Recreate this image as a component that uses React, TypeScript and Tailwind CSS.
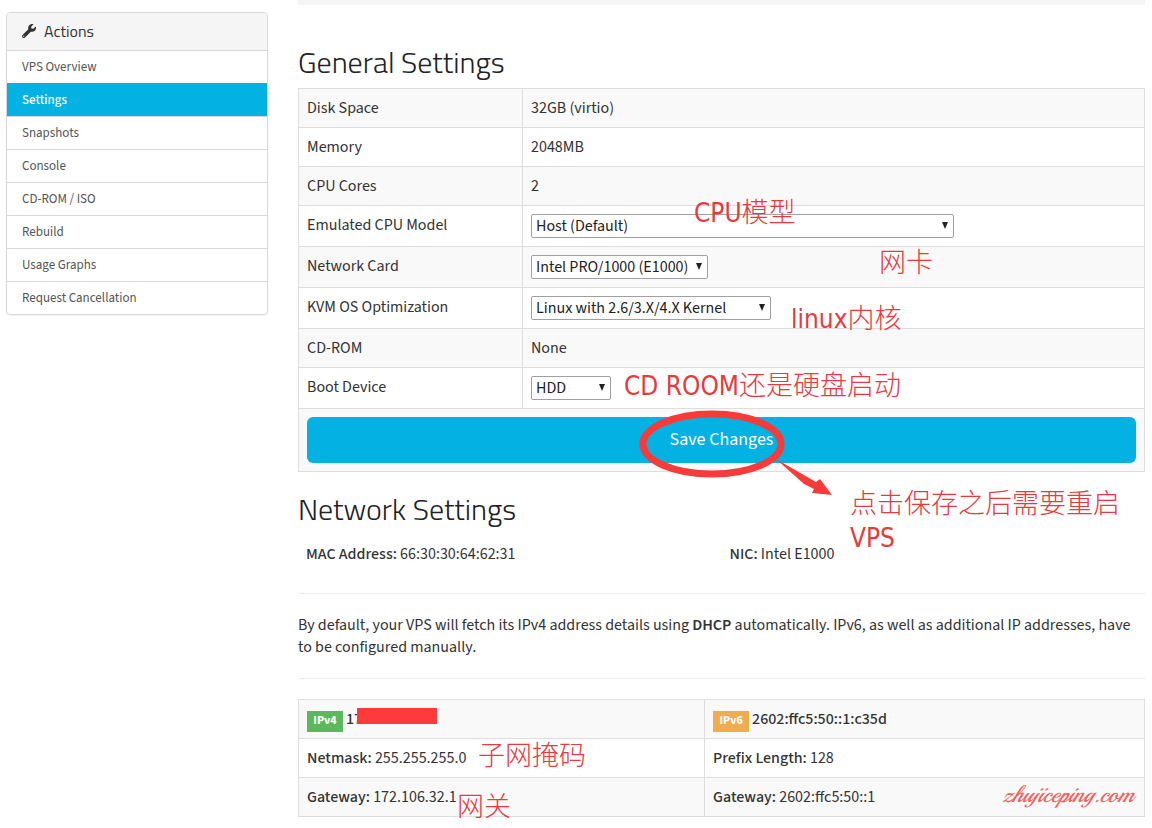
import type { ReactNode } from "react";
import { FaWrench } from "react-icons/fa";

const actions = [
  "VPS Overview",
  "Settings",
  "Snapshots",
  "Console",
  "CD-ROM / ISO",
  "Rebuild",
  "Usage Graphs",
  "Request Cancellation",
];

const cell = "border border-[#dddddd] p-2 align-top";

function Heading({ children }: { children: ReactNode }) {
  return (
    <h2 className="mb-[9px] pt-px font-['Titillium_Web','Noto_Sans',sans-serif] text-[30px] leading-[33px] font-light text-[#222222]">
      {children}
    </h2>
  );
}

function Row({ label, htmlFor, children }: { label: string; htmlFor?: string; children: ReactNode }) {
  return (
    <tr className="odd:bg-[#f9f9f9]">
      <th scope="row" className={`${cell} text-left font-normal`}>
        {htmlFor ? <label htmlFor={htmlFor} className="block">{label}</label> : label}
      </th>
      <td className={cell}>{children}</td>
    </tr>
  );
}

function Select({ id, width, options }: { id: string; width: string; options: string[] }) {
  return (
    <div className={`relative ${width}`}>
      <select
        id={id}
        className="block h-6 w-full appearance-none rounded-[2px] border border-[#a0a0a0] bg-white pr-4 pl-1 leading-[22px] text-[#222222]"
      >
        {options.map((option) => (
          <option key={option}>{option}</option>
        ))}
      </select>
      <svg viewBox="0 0 6 7" className="pointer-events-none absolute top-2 right-1.5 h-[7px] w-1.5" aria-hidden="true">
        <path d="M0 0h6L3 7z" fill="#222222" />
      </svg>
    </div>
  );
}

function Note({ className, latin, children }: { className: string; latin?: string; children: ReactNode }) {
  return (
    <span
      className={`pointer-events-none absolute font-['Noto_Sans_CJK_SC',sans-serif] text-[27px] leading-[34px] font-light whitespace-nowrap text-[#e8393c] ${className}`}
    >
      {latin && <Latin>{latin}</Latin>}
      {children}
    </span>
  );
}

function Latin({ children }: { children: ReactNode }) {
  return <span className="font-['DejaVu_Sans_Condensed','DejaVu_Sans',sans-serif] text-[26px] leading-[1] font-normal">{children}</span>;
}

function Badge({ color, children }: { color: string; children: ReactNode }) {
  return (
    <span className={`mt-[3px] mr-[3px] -mb-0.5 inline-block h-[21px] w-9 text-center text-[12px] leading-[19px] font-bold text-white ${color}`}>
      {children}
    </span>
  );
}

export default function App() {
  return (
    <div className="flex items-start gap-[30px] bg-white pr-[7px] pb-3 pl-1.5 font-['Source_Sans_Pro','Source_Sans_3','Noto_Sans_CJK_SC',sans-serif] text-[16px] leading-[22px] text-[#333333]">
      <nav className="mt-3 w-[262px] shrink-0 overflow-hidden rounded border border-[#d8d8d8] shadow-xs" aria-label="Actions">
        <h3 className="flex h-[37px] items-center gap-2 bg-[#f5f5f5] pb-px pl-[15px] font-['Titillium_Web','Noto_Sans',sans-serif] text-[16px] text-[#333333]">
          <FaWrench className="size-3.5" />
          Actions
        </h3>
        <ul className="text-[13px]">
          {actions.map((name) => (
            <li key={name}>
              <a
                href="#"
                className={
                  name === "Settings"
                    ? "block h-[33px] border-t border-[#04b1e3] bg-[#04b1e3] pl-[15px] leading-[32px] font-medium text-white"
                    : "block h-[33px] border-t border-[#d8d8d8] pl-[15px] leading-[32px] text-[#555555]"
                }
              >
                {name}
              </a>
            </li>
          ))}
        </ul>
      </nav>

      <main className="relative min-w-0 grow">
        <div className="mb-10 h-[5px] bg-[#f5f5f5]" />
        <Heading>General Settings</Heading>
        <form onSubmit={(event) => event.preventDefault()}>
          <table className="mb-5 w-full table-fixed border-collapse">
            <colgroup>
              <col className="w-[224px]" />
              <col />
            </colgroup>
            <tbody>
              <Row label="Disk Space">32GB (virtio)</Row>
              <Row label="Memory">2048MB</Row>
              <Row label="CPU Cores">2</Row>
              <Row label="Emulated CPU Model" htmlFor="cpu">
                <Select id="cpu" width="w-[423px]" options={["Host (Default)"]} />
              </Row>
              <Row label="Network Card" htmlFor="nic">
                <Select id="nic" width="w-[177px]" options={["Intel PRO/1000 (E1000)"]} />
              </Row>
              <Row label="KVM OS Optimization" htmlFor="os">
                <Select id="os" width="w-[240px]" options={["Linux with 2.6/3.X/4.X Kernel"]} />
              </Row>
              <Row label="CD-ROM">None</Row>
              <Row label="Boot Device" htmlFor="boot">
                <Select id="boot" width="w-20" options={["HDD", "CD-ROM"]} />
              </Row>
              <tr className="bg-[#f9f9f9]">
                <td colSpan={2} className={cell}>
                  <button type="submit" className="block h-[46px] w-full rounded-md bg-[#04b1e3] text-[18px] text-white">
                    Save Changes
                  </button>
                </td>
              </tr>
            </tbody>
          </table>
        </form>

        <Heading>Network Settings</Heading>
        <div className="grid grid-cols-2">
          <p className="p-2"><b className="font-medium">MAC Address:</b> 66:30:30:64:62:31</p>
          <p className="p-2"><b className="font-medium">NIC:</b> Intel E1000</p>
        </div>
        <hr className="my-5 border-[#eeeeee]" />
        <p>
          By default, your VPS will fetch its IPv4 address details using <b className="font-semibold">DHCP</b> automatically.
          IPv6, as well as additional IP addresses, have to be configured manually.
        </p>
        <hr className="my-5 border-[#eeeeee]" />
        <table className="w-full table-fixed border-collapse">
          <colgroup>
            <col className="w-[48%]" />
            <col />
          </colgroup>
          <tbody>
            <tr className="bg-[#f9f9f9]">
              <td className={cell}>
                <div className="flex">
                  <Badge color="bg-[#5cb85c]">IPv4</Badge>
                  <b className="font-medium">17</b>
                  <span className="-ml-[5px] h-4 w-20 bg-[#ff3a3a]" />
                </div>
              </td>
              <td className={cell}>
                <div className="flex">
                  <Badge color="bg-[#f0ad4e]">IPv6</Badge>
                  <b className="font-medium">2602:ffc5:50::1:c35d</b>
                </div>
              </td>
            </tr>
            <tr>
              <td className={cell}><b className="font-medium">Netmask:</b> 255.255.255.0</td>
              <td className={cell}><b className="font-medium">Prefix Length:</b> 128</td>
            </tr>
            <tr className="bg-[#f9f9f9]">
              <td className={cell}><b className="font-medium">Gateway:</b> 172.106.32.1</td>
              <td className={cell}><b className="font-medium">Gateway:</b> 2602:ffc5:50::1</td>
            </tr>
          </tbody>
        </table>

        <Note className="top-[194px] left-[396px]" latin="CPU">模型</Note>
        <Note className="top-[244px] left-[581px]">网卡</Note>
        <Note className="top-[300px] left-[493px]" latin="linux">内核</Note>
        <Note className="top-[367px] left-[326px]" latin="CD ROOM">还是硬盘启动</Note>
        <Note className="top-[485px] left-[552px]">点击保存之后需要重启<br /><Latin>VPS</Latin></Note>
        <Note className="top-[737px] left-[180px]">子网掩码</Note>
        <Note className="top-[788px] left-[159px]">网关</Note>
        <svg viewBox="0 0 200 90" className="pointer-events-none absolute top-[409px] left-[338px] h-[90px] w-[200px]" aria-hidden="true">
          <ellipse cx="76" cy="35" rx="69" ry="30" fill="none" stroke="#f63b3a" strokeWidth="7" />
          <path d="M140 50 L180 73 L184 70 L196 86 L176 84 L178 80 L168 75 Z" fill="#f63b3a" />
        </svg>
        <span className="pointer-events-none absolute top-[784px] right-3 font-['Playball','Liberation_Serif',serif] text-[23px] text-[#f26060] italic">
          zhujiceping.com
        </span>
      </main>
    </div>
  );
}
